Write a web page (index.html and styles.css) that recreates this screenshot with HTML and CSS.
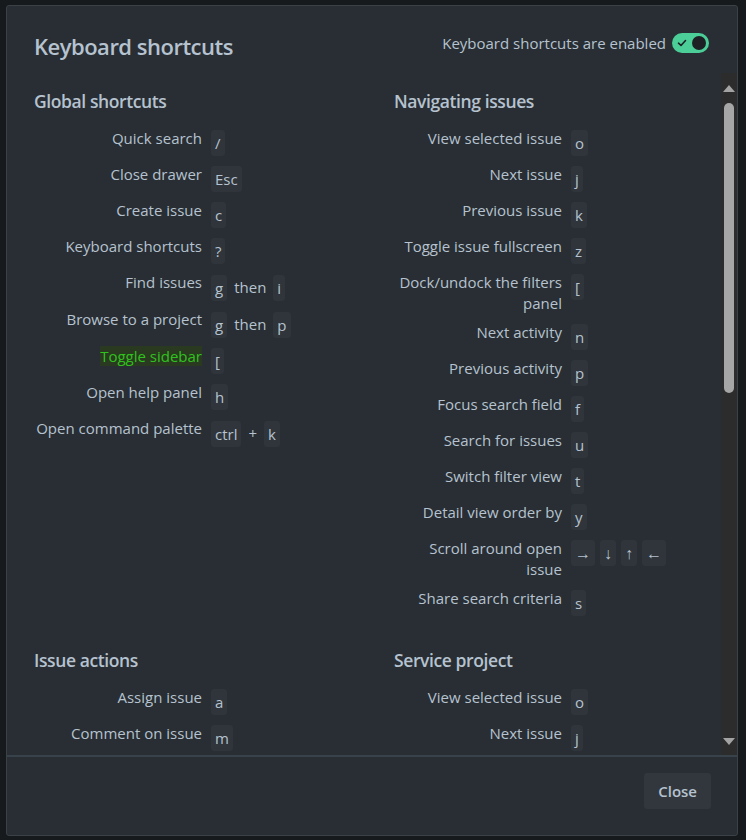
FILE: index.html
```html
<!DOCTYPE html>
<html lang="en">
<head>
<meta charset="utf-8">
<title>Keyboard shortcuts</title>
<link rel="stylesheet" href="styles.css">
</head>
<body>
<div class="modal">
  <header class="modal-header">
    <h1 class="title">Keyboard shortcuts</h1>
    <div class="enabled">
      <span>Keyboard shortcuts are enabled</span>
      <span class="toggle">
        <svg class="check" width="10" height="10" viewBox="0 0 10 10"><path d="M1.5 5.2 L4 7.5 L8.5 2.5" fill="none" stroke="#1d2125" stroke-width="1.6" stroke-linecap="round" stroke-linejoin="round"/></svg>
        <span class="knob"></span>
      </span>
    </div>
  </header>
  <div class="modal-body">
    <div class="grid">
      <section class="section">
        <h2>Global shortcuts</h2>
        <div class="row"><div class="label">Quick search</div><div class="keys"><kbd>/</kbd></div></div>
        <div class="row"><div class="label">Close drawer</div><div class="keys"><kbd>Esc</kbd></div></div>
        <div class="row"><div class="label">Create issue</div><div class="keys"><kbd>c</kbd></div></div>
        <div class="row"><div class="label">Keyboard shortcuts</div><div class="keys"><kbd>?</kbd></div></div>
        <div class="row"><div class="label">Find issues</div><div class="keys"><kbd>g</kbd><span class="sep">then</span><kbd>i</kbd></div></div>
        <div class="row"><div class="label">Browse to a project</div><div class="keys"><kbd>g</kbd><span class="sep">then</span><kbd>p</kbd></div></div>
        <div class="row"><div class="label"><span class="hl">Toggle sidebar</span></div><div class="keys"><kbd>[</kbd></div></div>
        <div class="row"><div class="label">Open help panel</div><div class="keys"><kbd>h</kbd></div></div>
        <div class="row"><div class="label">Open command palette</div><div class="keys"><kbd>ctrl</kbd><span class="sep">+</span><kbd>k</kbd></div></div>
      </section>
      <section class="section">
        <h2>Navigating issues</h2>
        <div class="row"><div class="label">View selected issue</div><div class="keys"><kbd>o</kbd></div></div>
        <div class="row"><div class="label">Next issue</div><div class="keys"><kbd>j</kbd></div></div>
        <div class="row"><div class="label">Previous issue</div><div class="keys"><kbd>k</kbd></div></div>
        <div class="row"><div class="label">Toggle issue fullscreen</div><div class="keys"><kbd>z</kbd></div></div>
        <div class="row"><div class="label">Dock/undock the filters panel</div><div class="keys"><kbd>[</kbd></div></div>
        <div class="row"><div class="label">Next activity</div><div class="keys"><kbd>n</kbd></div></div>
        <div class="row"><div class="label">Previous activity</div><div class="keys"><kbd>p</kbd></div></div>
        <div class="row"><div class="label">Focus search field</div><div class="keys"><kbd>f</kbd></div></div>
        <div class="row"><div class="label">Search for issues</div><div class="keys"><kbd>u</kbd></div></div>
        <div class="row"><div class="label">Switch filter view</div><div class="keys"><kbd>t</kbd></div></div>
        <div class="row"><div class="label">Detail view order by</div><div class="keys"><kbd>y</kbd></div></div>
        <div class="row"><div class="label">Scroll around open issue</div><div class="keys arrows"><kbd>→</kbd><kbd>↓</kbd><kbd>↑</kbd><kbd>←</kbd></div></div>
        <div class="row"><div class="label">Share search criteria</div><div class="keys"><kbd>s</kbd></div></div>
      </section>
      <section class="section">
        <h2>Issue actions</h2>
        <div class="row"><div class="label">Assign issue</div><div class="keys"><kbd>a</kbd></div></div>
        <div class="row"><div class="label">Comment on issue</div><div class="keys"><kbd>m</kbd></div></div>
      </section>
      <section class="section">
        <h2>Service project</h2>
        <div class="row"><div class="label">View selected issue</div><div class="keys"><kbd>o</kbd></div></div>
        <div class="row"><div class="label">Next issue</div><div class="keys"><kbd>j</kbd></div></div>
      </section>
    </div>
    <div class="scrollbar" aria-hidden="true">
      <svg class="sb-arrow" width="12" height="7" viewBox="0 0 12 7"><path d="M6 0 L12 7 L0 7 Z" fill="#a3a3a3"/></svg>
      <div class="sb-thumb"></div>
      <div class="sb-spacer"></div>
      <svg class="sb-arrow" width="12" height="7" viewBox="0 0 12 7"><path d="M0 0 L12 0 L6 7 Z" fill="#a3a3a3"/></svg>
    </div>
  </div>
  <footer class="modal-footer">
    <button class="btn" type="button">Close</button>
  </footer>
</div>
</body>
</html>
```

FILE: styles.css
```css
* { box-sizing: border-box; }

html, body {
  margin: 0;
  height: 840px;
  overflow: hidden;
}

body {
  background: #161a1d;
  padding: 5px 0 0 6px;
  font-family: "Open Sans", "Noto Sans", sans-serif;
  color: #b6c2cf;
}

.modal {
  width: 732px;
  height: 831px;
  background: #282e33;
  border: 1px solid #3a4147;
  border-radius: 3px;
  display: flex;
  flex-direction: column;
}

.modal-header {
  display: flex;
  justify-content: space-between;
  align-items: center;
  padding: 25px 28px 12px 27px;
  flex: none;
}

.title {
  margin: 0;
  font-size: 22px;
  letter-spacing: -0.5px;
  line-height: 30px;
  font-weight: 600;
  color: #b6c2cf;
}

.enabled {
  display: flex;
  align-items: center;
  gap: 6px;
  font-size: 15px;
  margin-bottom: 6px;
}

.toggle {
  width: 37px;
  height: 20px;
  border-radius: 10px;
  background: #4bce97;
  display: flex;
  align-items: center;
  justify-content: space-between;
  padding: 0 3px 0 5px;
}

.check { display: block; }

.knob {
  width: 14px;
  height: 14px;
  border-radius: 50%;
  background: #1d2125;
}

.modal-body {
  flex: 1;
  position: relative;
  overflow: hidden;
}

.grid {
  display: grid;
  grid-template-columns: 340px 340px;
  column-gap: 20px;
  row-gap: 8px;
  padding: 0 0 0 27px;
  align-items: start;
}

.section { padding-top: 16px; }

.section h2 {
  margin: 0 0 15px;
  font-size: 17.5px;
  letter-spacing: -0.4px;
  line-height: 24px;
  font-weight: 600;
}

.row {
  display: flex;
  align-items: flex-start;
  min-height: 28px;
  margin-bottom: 8px;
}

.label {
  width: 168px;
  flex: none;
  margin-right: 9px;
  text-align: right;
  font-size: 15px;
  line-height: 21px;
}

.hl {
  color: #2fc21e;
  background: #2a3a20;
}

.keys {
  display: flex;
  align-items: center;
  gap: 7px;
  padding-top: 2px;
  font-size: 15px;
}

.keys.arrows { gap: 5px; }

kbd {
  font-family: inherit;
  font-size: 15px;
  height: 26px;
  line-height: 27px;
  padding: 0 4px;
  background: #2f353b;
  border-radius: 3px;
  color: #b6c2cf;
}

.arrows kbd { font-size: 16px; }

.sep { line-height: 27px; }

/* decorative scrollbar drawn over the right edge of the scrolling body */
.scrollbar {
  position: absolute;
  top: 0;
  right: 0;
  bottom: 0;
  width: 16px;
  background: #2c2c2d;
  display: flex;
  flex-direction: column;
  align-items: center;
  padding: 12px 0 10px;
}

.sb-arrow { display: block; flex: none; }

.sb-thumb {
  flex: none;
  width: 10px;
  height: 290px;
  margin-top: 11px;
  border-radius: 5px;
  background: #a6a6a6;
}

.sb-spacer { flex: 1; }

.modal-footer {
  flex: none;
  height: 80px;
  border-top: 2px solid #38424a;
  display: flex;
  justify-content: flex-end;
  align-items: flex-start;
  padding: 16px 26px 0;
}

.btn {
  height: 36px;
  padding: 0 14px;
  border: none;
  border-radius: 3px;
  background: #31373d;
  color: #b6c2cf;
  font-family: inherit;
  font-size: 15px;
  font-weight: 600;
}
```
